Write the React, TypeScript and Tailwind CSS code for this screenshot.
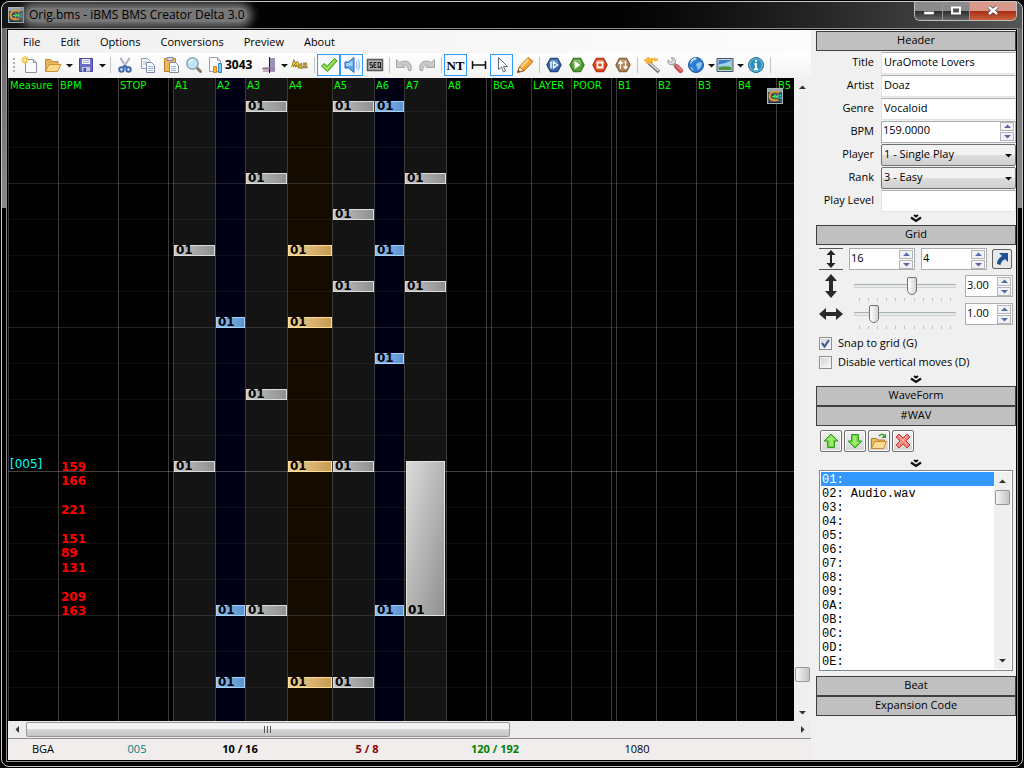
import { useState, type ReactNode } from 'react'
import clsx from 'clsx'

/* Chart data: positions are in ticks (192 per measure), relative to measure 005 */
const PX_PER_TICK = 3
const MEASURE_Y = 393

type Tone = 'white' | 'blue' | 'gold'
type Note = { at: number; until?: number }
type Lane = { label?: string; width: string; bg?: string; tone?: Tone; notes?: Note[] }

const at = (...ticks: number[]): Note[] => ticks.map((t) => ({ at: t }))

const LANES: Lane[] = [
  { label: 'Measure', width: 'w-[50px]' },
  { label: 'BPM', width: 'w-[60px]' },
  { label: 'STOP', width: 'w-[50px]' },
  { width: 'w-[5px]' },
  { label: 'A1', width: 'w-[42px]', bg: 'bg-[#141414]', tone: 'white', notes: at(72, 0) },
  { label: 'A2', width: 'w-[30px]', bg: 'bg-[#000014]', tone: 'blue', notes: at(48, -48, -72) },
  { label: 'A3', width: 'w-[42px]', bg: 'bg-[#141414]', tone: 'white', notes: at(120, 96, 24, -48) },
  { label: 'A4', width: 'w-[45px]', bg: 'bg-[#140c00]', tone: 'gold', notes: at(72, 48, 0, -72) },
  { label: 'A5', width: 'w-[42px]', bg: 'bg-[#141414]', tone: 'white', notes: at(120, 84, 60, 0, -72) },
  { label: 'A6', width: 'w-[30px]', bg: 'bg-[#000014]', tone: 'blue', notes: at(120, 72, 36, -48) },
  { label: 'A7', width: 'w-[42px]', bg: 'bg-[#141414]', tone: 'white', notes: [...at(96, 60), { at: -48, until: 0 }] },
  { label: 'A8', width: 'w-[40px]' },
  { width: 'w-[5px]' },
  { label: 'BGA', width: 'w-[40px]' },
  { label: 'LAYER', width: 'w-[40px]' },
  { label: 'POOR', width: 'w-[40px]' },
  { width: 'w-[5px]' },
  { label: 'B1', width: 'w-[40px]' },
  { label: 'B2', width: 'w-[40px]' },
  { label: 'B3', width: 'w-[40px]' },
  { label: 'B4', width: 'w-[40px]' },
  { label: 'B5', width: 'w-[40px]' },
]

const BPM_CHANGES = [
  { at: 0, bpm: 159 },
  { at: -4.8, bpm: 166 },
  { at: -14.4, bpm: 221 },
  { at: -24, bpm: 151 },
  { at: -28.8, bpm: 89 },
  { at: -33.6, bpm: 131 },
  { at: -43.2, bpm: 209 },
  { at: -48, bpm: 163 },
]

const TONES: Record<Tone, string> = {
  white: 'border-[#dcdcdc] from-[#c4c4c4] to-[#909090]',
  blue: 'border-[#a8d0fa] from-[#8fbcec] to-[#5b93d0]',
  gold: 'border-[#ffdf9c] from-[#efcf92] to-[#c89c50]',
}

const WAVS = ['01:', '02: Audio.wav', '03:', '04:', '05:', '06:', '07:', '08:', '09:', '0A:', '0B:', '0C:', '0D:', '0E:']

const noteTop = (tick: number) => Math.round(MEASURE_Y - tick * PX_PER_TICK) - 10

/* ---------- icons ---------- */

function Svg({ children, size = 18 }: { children: ReactNode; size?: number }) {
  return (
    <svg width={size} height={size} viewBox="0 0 18 18" fill="none" className="shrink-0">
      {children}
    </svg>
  )
}

function AppIcon() {
  return (
    <svg width="16" height="16" viewBox="0 0 16 16" className="shrink-0">
      <rect x=".5" y=".5" width="15" height="15" fill="#44535c" stroke="#a9b4ba" />
      <rect x="1" y="1" width="14" height="3" fill="#98a6ae" />
      <path d="M12 4.500C8 2.500 2.500 4 2.500 8S7 13 11 12" fill="none" stroke="#ee9a2c" strokeWidth="1.800" />
      <path d="M5 8.500h2M7.500 10.500l.5-3.500 1.500 2L11 7v3.500" fill="none" stroke="#55e06a" strokeWidth="1.200" />
      <path d="M12.500 10h2M12.500 7.500h2" stroke="#38b8f0" strokeWidth="1.500" />
      <path d="M2 14.500h12" stroke="#222b30" />
    </svg>
  )
}

const NewIcon = () => (
  <Svg>
    <path d="M4.500 3.500h8l3 3v10h-11z" fill="#fafbfd" stroke="#8a93a8" />
    <path d="M12.500 3.500v3h3" fill="#dde3ee" stroke="#8a93a8" />
    <path d="M4 0v8M0 4h8M1.200 1.200l5.600 5.600M6.800 1.200L1.200 6.800" stroke="#f6b81c" strokeWidth="1.200" />
    <circle cx="4" cy="4" r="1.500" fill="#fff3a0" />
  </Svg>
)

const OpenIcon = () => (
  <Svg>
    <path d="M1.500 15.500v-12h5l1.500 2h6v3" fill="#e8b45a" stroke="#c88a34" />
    <path d="M1.500 15.500l3.500-7h12l-3.500 7z" fill="#ffd98a" stroke="#cf9238" />
  </Svg>
)

const SaveIcon = () => (
  <Svg>
    <path d="M2.500 2.500h13v13h-13z" fill="#6a6ec4" stroke="#45489c" />
    <path d="M5 3h8v5H5z" fill="#f4f6ff" />
    <path d="M6 4.500h6M6 6.500h6" stroke="#a9add8" />
    <path d="M5 11h8v4.500H5z" fill="#c6c9e8" />
    <path d="M6.500 12h2.500v3.500H6.500z" fill="#45489c" />
  </Svg>
)

const CutIcon = () => (
  <Svg>
    <path d="M4.500 2l6 9M13.500 2l-6 9" stroke="#8e99a8" strokeWidth="2" />
    <path d="M5 2l5.500 8.500M13 2l-5.500 8.500" stroke="#e4e8ee" strokeWidth=".7" />
    <circle cx="5.500" cy="13.500" r="2.200" stroke="#3c66b4" strokeWidth="2" />
    <circle cx="12.500" cy="13.500" r="2.200" stroke="#3c66b4" strokeWidth="2" />
    <path d="M6.500 12l2.500-2 2.500 2" stroke="#3c66b4" strokeWidth="2.200" />
  </Svg>
)

const CopyIcon = () => (
  <Svg>
    <path d="M2.500 2.500h6l3 3v7h-9z" fill="#f5f7fb" stroke="#8f9bb2" />
    <path d="M4 6h4M4 8h4" stroke="#b4bed2" />
    <path d="M7.500 6.500h5l3 3v7h-8z" fill="#fafbfe" stroke="#7f8ca8" />
    <path d="M9 10.500h5M9 12.500h5M9 14.500h5" stroke="#9fb0d0" />
  </Svg>
)

const PasteIcon = () => (
  <Svg>
    <path d="M2.500 2.500h11v13h-11z" fill="#f0b65e" stroke="#c07f2c" />
    <path d="M5 1.500h6v3H5z" fill="#d8dae0" stroke="#8a8a90" />
    <path d="M7.500 6.500h6l3 3v7h-9z" fill="#fafbfe" stroke="#7f8ca8" />
    <path d="M9 10.500h5M9 12.500h5M9 14.500h5" stroke="#9fb0d0" />
  </Svg>
)

const FindIcon = () => (
  <Svg>
    <path d="M11.500 11.500l4 4" stroke="#8c7466" strokeWidth="3" strokeLinecap="round" />
    <circle cx="7.500" cy="7.500" r="5.700" fill="#bfe4fa" stroke="#8fa6ba" strokeWidth="1.500" />
    <path d="M4.500 7a3.500 3.500 0 013.500-3" stroke="#fff" strokeWidth="1.500" />
  </Svg>
)

const StatsIcon = () => (
  <Svg>
    <path d="M3.500 1.500h8l3 3v11h-11z" fill="#fafbfd" stroke="#9aa2b2" />
    <path d="M11.500 1.500v3h3" stroke="#9aa2b2" />
    <path d="M7.500 10.500h3v6h-3z" fill="#ffb43c" stroke="#e07d10" />
    <path d="M12.500 7.500h3v9h-3z" fill="#7cc6f8" stroke="#2a86d0" />
  </Svg>
)

const ColumnIcon = () => (
  <Svg>
    <path d="M10 2h5v10h-5z" fill="#9d90bc" />
    <path d="M3 11h6v5H3z" fill="#c8a8b8" />
    <path d="M10 12h5v4h-5z" fill="#9d8fb4" />
    <path d="M9.500 1v16" stroke="#1b1b22" />
    <path d="M2 12.500h13" stroke="#8a7a98" />
  </Svg>
)

const MyBmsIcon = () => (
  <Svg>
    <path d="M1.500 11l1.500-5 1.500 3L6.500 6 6 11M8 8v3h2M10 7v6M12 8h4M11.500 11h5" stroke="#6a5a30" strokeWidth="2.400" />
    <path d="M1.500 11l1.500-5 1.500 3L6.500 6 6 11M8 8v3h2M10 7v6" stroke="#f2d21c" strokeWidth="1.100" />
    <path d="M12 8h4M11.500 11h5" stroke="#e8b860" />
  </Svg>
)

const CheckIcon = () => (
  <Svg>
    <path d="M1.500 10l3-2.500L7 10.500l7.500-8L17 5 7.500 15.500z" fill="#7ed63e" stroke="#3f9418" />
    <path d="M3.500 9.500L7 13l8-9" stroke="#b7f07e" />
  </Svg>
)

const SpeakerIcon = () => (
  <Svg>
    <path d="M2 6h3.500L11 1.500v15L5.500 12H2z" fill="#5ea4ee" stroke="#2868c0" />
    <path d="M3 7h3l3.500-3v6H3z" fill="#a4d0fa" />
    <path d="M13 5.500q2 3.500 0 7M15 3.500q3 5.500 0 11" stroke="#8cc0f4" strokeWidth="1.200" />
  </Svg>
)

const SeqIcon = () => (
  <Svg>
    <rect x="1.500" y="3.500" width="15" height="11" fill="#b0b0b0" stroke="#5a5a5a" strokeWidth="1.500" />
    <path d="M6.500 6.500H4V9h2.500v2.500H4M10.500 6.500h-2.500v5h2.500M8 9h2M12 6.500h2.500v5H12zM13.500 10.500l1.500 2" stroke="#111" />
  </Svg>
)

const UndoIcon = ({ flip }: { flip?: boolean }) => (
  <svg width="18" height="18" viewBox="0 0 18 18" className={clsx('shrink-0', flip && '-scale-x-100')}>
    <path d="M1.500 3.500v8h8.500L7.500 9q5-1 6 5.500h2.500q1.500-9-6-9.500-3.500 0-5.500 1.500z" fill="#cacaca" stroke="#a8a8a8" />
  </svg>
)

const NtIcon = () => <span className="font-['Liberation_Serif',serif] text-[13px] leading-none font-bold">NT</span>

const SpanIcon = () => (
  <Svg>
    <path d="M2.500 5v8M15.500 5v8M2 9h14" stroke="#111" strokeWidth="1.500" />
  </Svg>
)

const CursorIcon = () => (
  <Svg>
    <path d="M5.500 1.500v12l3-2.500 2 5 2-1-2-4.500h4z" fill="#fff" stroke="#6a6a6a" />
  </Svg>
)

const PencilIcon = () => (
  <Svg>
    <path d="M1.500 16.500l2-6 8.500-9 5 4-9 9.500z" fill="#f6a43a" stroke="#c06a14" />
    <path d="M3.500 11l8-8.500 2 1.500-8 9z" fill="#ffd07a" />
    <path d="M1.500 16.500l2-6 4.500 4z" fill="#f8e2bc" stroke="#a8682c" />
    <path d="M1.500 16.500l.8-2.500 1.700 1.500z" fill="#333" />
  </Svg>
)

function Hex({ fill, edge, children }: { fill: string; edge: string; children: ReactNode }) {
  return (
    <Svg>
      <path d="M5.500 2.500h7L16 9l-3.500 6.500h-7L2 9z" fill={fill} stroke={edge} strokeWidth="1.500" strokeLinejoin="round" />
      <path d="M6 3.500h6l2 4H4z" fill="#fff" opacity=".25" />
      {children}
    </Svg>
  )
}

const WandIcon = () => (
  <Svg>
    <path d="M6 7l10 9" stroke="#6e6e6e" strokeWidth="3.500" />
    <path d="M6.500 7l9 8" stroke="#e4e4e4" strokeWidth="1.500" />
    <path d="M1 4l3-1 1-2 2 2 3-1-1 3 1 2-3-.5L4 8 3.500 6z" fill="#f8b62c" stroke="#e89a18" strokeWidth=".6" />
    <path d="M10 3l2-1.500 1 1.500 2-1v3l-2-.5-1.500 1z" fill="#f6b020" />
  </Svg>
)

const WrenchIcon = () => (
  <Svg>
    <path d="M7.500 7.500l3 3" stroke="#9a9a9a" strokeWidth="3.500" />
    <path d="M2 4l2.500 2L6.500 4.500 5.500 1.500Q10 2 9.500 6.500 7 10 3.500 8.500 1 7 2 4z" fill="#dcdcdc" stroke="#8a8a8a" strokeWidth=".8" />
    <path d="M11 11l3.500 3.500" stroke="#c84c50" strokeWidth="5" strokeLinecap="round" />
    <path d="M11 10l4 4" stroke="#f08c8c" strokeWidth="1.500" strokeLinecap="round" />
  </Svg>
)

const GlobeIcon = () => (
  <Svg>
    <circle cx="9" cy="9" r="7.500" fill="#2f7fd0" stroke="#1c569c" />
    <path d="M3 6q3-4 7-4-1 3-4 3-1 3-3 3zM9 8q4-3 6-1-1 5-4 7-1-3-2-6zM3 11l3 1v3z" fill="#a8dcf4" opacity=".8" />
    <path d="M4 5q2-3 5-3" stroke="#fff" />
  </Svg>
)

const PictureIcon = () => (
  <Svg>
    <path d="M1 2.500h16v13H1z" fill="#c8d4dc" stroke="#3f5468" />
    <path d="M2.500 4h13v6h-13z" fill="#3a80c8" />
    <path d="M2.500 8.500q7-1 13-4V11h-13z" fill="#9fd0ee" />
    <path d="M2.500 11q6-1.500 13 0v3h-13z" fill="#4f9440" />
  </Svg>
)

const InfoIcon = () => (
  <Svg>
    <circle cx="9" cy="9" r="7.500" fill="#2d90bc" stroke="#1c6c94" />
    <circle cx="9" cy="9" r="6.300" stroke="#9cd4ea" strokeWidth=".8" />
    <path d="M9 4v2M7.500 8H9v5M7 13.200h4" stroke="#fff" strokeWidth="1.800" />
  </Svg>
)

const ArrowFaceIcon = ({ down }: { down?: boolean }) => (
  <svg width="18" height="18" viewBox="0 0 18 18" className={clsx('shrink-0', down && 'rotate-180')}>
    <path d="M9 2l7 7h-3.500v6.500h-7V9H2z" fill="#6ed63c" stroke="#2f9c1c" strokeLinejoin="round" />
    <path d="M9 4l4.500 4h-2.500v6H7.500V8h-3z" fill="#b2f08a" opacity=".7" />
  </svg>
)

const BrowseIcon = () => (
  <Svg>
    <path d="M1.500 16.500v-10h5l1 1.500h7v3" fill="#f0bc60" stroke="#b87a28" />
    <path d="M1.500 16.500l3-7h12l-3 7z" fill="#ffdc94" stroke="#c88a34" />
    <path d="M9 4q2.500-3 5-.5" stroke="#3a9c28" strokeWidth="1.500" />
    <path d="M16 1.500V6h-4.500z" fill="#3a9c28" />
  </Svg>
)

const RemoveIcon = () => (
  <Svg>
    <path d="M5 2l4 4 4-4 3 3-4 4 4 4-3 3-4-4-4 4-3-3 4-4-4-4z" fill="#f08078" stroke="#c83c3c" strokeLinejoin="round" />
    <path d="M5 4l8 9M13 4l-8 9" stroke="#fbb8b0" strokeWidth="1" />
  </Svg>
)

const Triangle = ({ dir = 'down', fill = '#111' }: { dir?: 'up' | 'down' | 'left' | 'right'; fill?: string }) => (
  <svg
    width="7"
    height="7"
    viewBox="0 0 7 7"
    className={clsx('shrink-0', dir === 'up' && 'rotate-180', dir === 'left' && 'rotate-90', dir === 'right' && '-rotate-90')}
  >
    <path d="M0 2h7L3.500 5.500z" fill={fill} />
  </svg>
)

/* ---------- toolbar ---------- */

function Tool({ label, active, children }: { label: string; active?: boolean; children: ReactNode }) {
  return (
    <button
      aria-label={label}
      className={clsx(
        'flex h-[22px] w-[23px] shrink-0 items-center justify-center border',
        active ? 'border-[#3399ff] bg-[#f6fafe]' : 'border-transparent'
      )}
    >
      {children}
    </button>
  )
}

function SplitTool({ label, children }: { label: string; children: ReactNode }) {
  return (
    <div className="flex shrink-0 items-center">
      <Tool label={label}>{children}</Tool>
      <button aria-label={`${label} options`} className="flex h-[22px] w-[10px] items-center justify-center">
        <Triangle />
      </button>
    </div>
  )
}

function MenuTool({ label, children }: { label: string; children: ReactNode }) {
  return (
    <button aria-label={label} className="flex h-[22px] w-[29px] shrink-0 items-center justify-center gap-[3px]">
      {children}
      <Triangle />
    </button>
  )
}

const Sep = () => <span className="mr-[2px] ml-[3px] h-4 w-px shrink-0 bg-[#c4c4c4]" />

function Toolbar() {
  return (
    <div className="flex h-[25px] shrink-0 items-center overflow-hidden bg-linear-to-b from-white to-[#f2f2f2] pb-px pl-[5px]">
      <svg width="5" height="16" viewBox="0 0 5 16" className="shrink-0">
        <path d="M1 1v14" stroke="#b0b0b0" strokeWidth="2" strokeDasharray="2 2" />
      </svg>
      <Tool label="New"><NewIcon /></Tool>
      <SplitTool label="Open"><OpenIcon /></SplitTool>
      <SplitTool label="Save"><SaveIcon /></SplitTool>
      <Sep />
      <Tool label="Cut"><CutIcon /></Tool>
      <Tool label="Copy"><CopyIcon /></Tool>
      <Tool label="Paste"><PasteIcon /></Tool>
      <Tool label="Find"><FindIcon /></Tool>
      <button className="flex h-[22px] w-[54px] shrink-0 items-center gap-px pl-px text-xs font-bold">
        <StatsIcon />
        3043
      </button>
      <MenuTool label="Columns"><ColumnIcon /></MenuTool>
      <Tool label="My BMS"><MyBmsIcon /></Tool>
      <Sep />
      <Tool label="Error check" active><CheckIcon /></Tool>
      <Tool label="Preview on click" active><SpeakerIcon /></Tool>
      <Tool label="Sequencer"><SeqIcon /></Tool>
      <Sep />
      <Tool label="Undo"><UndoIcon /></Tool>
      <Tool label="Redo"><UndoIcon flip /></Tool>
      <Sep />
      <Tool label="NT mode" active><NtIcon /></Tool>
      <Tool label="Long note"><SpanIcon /></Tool>
      <Tool label="Select" active><CursorIcon /></Tool>
      <Tool label="Write"><PencilIcon /></Tool>
      <Sep />
      <Tool label="Play from start">
        <Hex fill="#3468ac" edge="#234c84"><path d="M6 5.500v7M8.500 6l4 3-4 3z" stroke="#fff" fill="none" strokeWidth="1.500" /></Hex>
      </Tool>
      <Tool label="Play">
        <Hex fill="#58a034" edge="#3c7a20"><path d="M6.500 5l6 4-6 4z" fill="#fff" /></Hex>
      </Tool>
      <Tool label="Stop">
        <Hex fill="#e04a20" edge="#b83410"><path d="M6.500 6.500h5v5h-5z" fill="#e04a20" stroke="#fff" strokeWidth="1.800" /></Hex>
      </Tool>
      <Tool label="Preview options">
        <Hex fill="#b08458" edge="#8c643c"><path d="M6.500 13V5.500M4.500 7.500l2-2 2 2M11.500 5v7.500M9.500 10.500l2 2 2-2" stroke="#fff" strokeWidth="1.300" /></Hex>
      </Tool>
      <Sep />
      <Tool label="Visual options"><WandIcon /></Tool>
      <Tool label="General options"><WrenchIcon /></Tool>
      <MenuTool label="Language"><GlobeIcon /></MenuTool>
      <MenuTool label="Theme"><PictureIcon /></MenuTool>
      <Tool label="About"><InfoIcon /></Tool>
      <Sep />
    </div>
  )
}

/* ---------- chart ---------- */

function NoteBlock({ note, tone }: { note: Note; tone: Tone }) {
  const long = note.until !== undefined
  const top = noteTop(note.until ?? note.at)
  return (
    <div
      className={clsx(
        'absolute z-10 flex items-end border pl-px',
        long
          ? 'left-px right-px border-[#e4e4e4] bg-linear-to-br from-[#dcdcdc] to-[#909090]'
          : clsx('inset-x-0 bg-linear-to-r', TONES[tone])
      )}
      style={{ top, height: noteTop(note.at) - top + 11 }}
    >
      <span className="text-xs leading-[9px] font-bold">01</span>
    </div>
  )
}

function Chart() {
  return (
    <div className="relative isolate flex min-w-0 flex-1 overflow-hidden bg-black font-['DejaVu_Sans',sans-serif]">
      {LANES.map((lane, i) => (
        <div key={i} className={clsx('relative shrink-0 border-l border-[#3a3a3a]', lane.width, lane.bg)}>
          <span className="block pl-px text-[10px] leading-4 text-[#00ff00]">{lane.label}</span>
          {lane.notes?.map((n) => <NoteBlock key={n.at} note={n} tone={lane.tone ?? 'white'} />)}
          {lane.label === 'Measure' && (
            <span className="absolute left-px text-xs leading-[14px] text-[#00ffff]" style={{ top: MEASURE_Y - 14 }}>
              [005]
            </span>
          )}
          {lane.label === 'BPM' &&
            BPM_CHANGES.map((c) => (
              <span
                key={c.at}
                className="absolute left-[2px] text-xs leading-[13px] font-bold text-[#ff0000]"
                style={{ top: noteTop(c.at) }}
              >
                {c.bpm}
              </span>
            ))}
        </div>
      ))}

      {/* Beat lines */}
      <div className="pointer-events-none absolute inset-0 overflow-hidden">
        <div className="h-[34px] border-b border-white/5" />
        {Array.from({ length: 40 }, (_, i) => (
          <div
            key={i}
            className={clsx('h-9 border-b', i === 9 ? 'border-white/25' : i % 4 === 1 ? 'border-white/12' : 'border-white/5')}
          />
        ))}
      </div>

      <div className="absolute top-[10px] right-[11px] z-10">
        <AppIcon />
      </div>
    </div>
  )
}

/* ---------- scroll bars ---------- */

function VScroll({ thumbAt, className }: { thumbAt: 'start' | 'end'; className?: string }) {
  return (
    <div className={clsx('flex w-[17px] shrink-0 flex-col items-center bg-[#efefef]', className)}>
      <button aria-label="Scroll up" className="flex h-[18px] w-full items-center justify-center"><Triangle dir="up" fill="#333" /></button>
      <div className={clsx('flex flex-1 flex-col', thumbAt === 'end' && 'justify-end pb-[22px]')}>
        <div className="h-[15px] w-[15px] rounded-xs border border-[#979797] bg-linear-to-r from-[#f6f6f6] to-[#c4c4c8]" />
      </div>
      <button aria-label="Scroll down" className="flex h-[17px] w-full items-center justify-center"><Triangle fill="#333" /></button>
    </div>
  )
}

function HScroll() {
  return (
    <div className="flex h-[17px] shrink-0 items-center bg-[#ececec]">
      <button aria-label="Scroll left" className="flex h-full w-[18px] items-center justify-center"><Triangle dir="left" fill="#333" /></button>
      <div className="flex flex-1">
        <div className="flex h-[15px] w-[63%] items-center justify-center gap-[2px] rounded-xs border border-[#979797] bg-linear-to-b from-[#f4f4f4] from-50% via-[#d8d8d8] via-50% to-[#c4c4c4]">
          <i className="h-[7px] w-px bg-[#555]" />
          <i className="h-[7px] w-px bg-[#555]" />
          <i className="h-[7px] w-px bg-[#555]" />
        </div>
      </div>
      <button aria-label="Scroll right" className="flex h-full w-[17px] items-center justify-center"><Triangle dir="right" fill="#333" /></button>
    </div>
  )
}

/* ---------- side panel ---------- */

function SectionButton({ children }: { children: ReactNode }) {
  return (
    <button className="block h-5 w-full border border-[#404040] bg-[#c0c0c0] pb-[2px] text-center text-[11px] leading-4">
      {children}
    </button>
  )
}

function Collapse() {
  return (
    <button aria-label="Collapse" className="flex h-[13px] w-full items-center justify-center">
      <svg width="12" height="9" viewBox="0 0 12 9" fill="none">
        <path d="M1 3.500l5 3.500 5-3.500" stroke="#111" strokeWidth="2.200" />
        <path d="M4 1l2 1.500L8 1" stroke="#111" strokeWidth="2" />
      </svg>
    </button>
  )
}

function Spinner({ id, label, value, className }: { id: string; label?: string; value: string; className?: string }) {
  return (
    <div className={clsx('flex h-[22px] items-center border border-[#abadb3] bg-white pr-px', className)}>
      <input id={id} aria-label={label} defaultValue={value} className="h-full w-0 min-w-0 flex-1 bg-white pb-1 pl-px text-[11px] outline-none" />
      <div className="flex flex-col gap-px">
        <button aria-label="Increase" className="flex h-[9px] w-[14px] items-center justify-center border border-[#b4b4b8] bg-[#f2f2f4]">
          <Triangle dir="up" fill="#5468a8" />
        </button>
        <button aria-label="Decrease" className="flex h-[9px] w-[14px] items-center justify-center border border-[#b4b4b8] bg-[#f2f2f4]">
          <Triangle fill="#5468a8" />
        </button>
      </div>
    </div>
  )
}

function Field({ id, label, children }: { id: string; label: string; children: ReactNode }) {
  return (
    <div className="flex h-[23px] items-center">
      <label htmlFor={id} className="w-[65px] shrink-0 pr-[7px] text-right text-[11px]">{label}</label>
      <div className="min-w-0 flex-1">{children}</div>
    </div>
  )
}

function TextField({ id, label, value }: { id: string; label: string; value: string }) {
  return (
    <Field id={id} label={label}>
      <input
        id={id}
        defaultValue={value}
        className="block h-[22px] w-full border border-[#e2e3ea] border-t-[#abadb3] bg-white px-[2px] pb-[3px] text-[11px] outline-none"
      />
    </Field>
  )
}

function SelectField({ id, label, options }: { id: string; label: string; options: string[] }) {
  return (
    <Field id={id} label={label}>
      <div className="relative">
        <select
          id={id}
          className="block h-[22px] w-full appearance-none rounded-xs border border-[#707070] bg-linear-to-b from-[#f2f2f2] from-50% via-[#dedede] via-50% to-[#cfcfcf] pl-[2px] text-[11px] outline-none"
        >
          {options.map((o) => <option key={o}>{o}</option>)}
        </select>
        <span className="pointer-events-none absolute top-[8px] right-[4px]"><Triangle /></span>
      </div>
    </Field>
  )
}

function Slider({ label, value, onChange }: { label: string; value: number; onChange: (v: number) => void }) {
  return (
    <div className="flex w-[102px] flex-col pt-[5px]">
      <input
        type="range"
        aria-label={label}
        min={0.25}
        max={5}
        step={0.05}
        value={value}
        onChange={(e) => onChange(Number(e.target.value))}
        className="block h-[18px] w-full appearance-none bg-transparent [&::-webkit-slider-runnable-track]:h-[4px] [&::-webkit-slider-runnable-track]:border [&::-webkit-slider-runnable-track]:border-[#d0d4d4] [&::-webkit-slider-runnable-track]:border-t-[#a8b0b0] [&::-webkit-slider-runnable-track]:bg-[#e7eaea] [&::-webkit-slider-thumb]:-mt-[8px] [&::-webkit-slider-thumb]:h-[18px] [&::-webkit-slider-thumb]:w-[10px] [&::-webkit-slider-thumb]:appearance-none [&::-webkit-slider-thumb]:rounded-t-xs [&::-webkit-slider-thumb]:rounded-b-[5px] [&::-webkit-slider-thumb]:border [&::-webkit-slider-thumb]:border-[#707070] [&::-webkit-slider-thumb]:bg-linear-to-r [&::-webkit-slider-thumb]:from-white [&::-webkit-slider-thumb]:to-[#d4d4d4]"
      />
      <div className="flex justify-between px-[5px] pt-[3px]">
        {Array.from({ length: 11 }, (_, i) => <i key={i} className="h-[3px] w-px bg-[#c0c0c0]" />)}
      </div>
    </div>
  )
}

function CheckRow({ label, checked, onChange }: { label: string; checked: boolean; onChange: (v: boolean) => void }) {
  return (
    <label className="flex h-[19px] items-center gap-[6px] text-[11px]">
      <span className="relative flex">
        <input
          type="checkbox"
          checked={checked}
          onChange={(e) => onChange(e.target.checked)}
          className="h-[13px] w-[13px] appearance-none border border-[#8e8f8f] bg-linear-to-br from-[#cdd2d8] to-[#fafafa] shadow-[inset_0_0_0_1px_#f4f4f4]"
        />
        {checked && (
          <svg width="13" height="13" viewBox="0 0 13 13" className="pointer-events-none absolute inset-0">
            <path d="M3 6l2.500 3.500L10 3" fill="none" stroke="#3c4f94" strokeWidth="2" />
          </svg>
        )}
      </span>
      {label}
    </label>
  )
}

function IconButton({ label, children }: { label: string; children: ReactNode }) {
  return (
    <button
      aria-label={label}
      className="flex h-[22px] w-[22px] items-center justify-center rounded-xs border border-[#707070] bg-linear-to-b from-[#f4f4f4] to-[#d4d4d4] shadow-[inset_0_0_0_1px_#fafafa]"
    >
      {children}
    </button>
  )
}

function SidePanel() {
  const [vZoom, setVZoom] = useState(3)
  const [hZoom, setHZoom] = useState(1)
  const [snap, setSnap] = useState(true)
  const [lockVertical, setLockVertical] = useState(false)
  const [wav, setWav] = useState(0)

  return (
    <aside className="w-[205px] shrink-0 bg-[#f0f0f0] pt-px pl-[5px]">
      <SectionButton>Header</SectionButton>
      <TextField id="title" label="Title" value="UraOmote Lovers" />
      <TextField id="artist" label="Artist" value="Doaz" />
      <TextField id="genre" label="Genre" value="Vocaloid" />
      <Field id="bpm" label="BPM"><Spinner id="bpm" value="159.0000" /></Field>
      <SelectField id="player" label="Player" options={['1 - Single Play', '2 - Couple Play', '3 - Double Play']} />
      <SelectField id="rank" label="Rank" options={['3 - Easy', '2 - Normal', '1 - Hard', '0 - Very Hard']} />
      <TextField id="level" label="Play Level" value="" />
      <Collapse />

      <SectionButton>Grid</SectionButton>
      <div className="flex h-[27px] items-center pt-px pl-[3px]">
        <svg width="24" height="22" viewBox="0 0 24 22" fill="none">
          <path d="M0 .500h24M0 21.500h24" stroke="#555" />
          <path d="M12 4v14" stroke="#222" strokeWidth="2" />
          <path d="M12 2l4.500 5h-9zM12 20l4.500-5h-9z" fill="#222" />
        </svg>
        <Spinner id="division" label="Grid division" value="16" className="ml-[6px] w-[66px]" />
        <Spinner id="subdivision" label="Grid subdivision" value="4" className="ml-[6px] w-[66px]" />
        <button aria-label="Swap" className="ml-[5px] flex h-5 w-5 items-center justify-center rounded-xs border border-[#606060] bg-[#e8e8e8]">
          <svg width="14" height="14" viewBox="0 0 14 14">
            <path d="M4 1h9v9l-3-3q-4 2-4.500 6L2 12q0-5 5-8z" fill="#1c4f94" />
          </svg>
        </button>
      </div>
      <div className="flex h-[28px] items-center pl-[3px]">
        <svg width="24" height="24" viewBox="0 0 24 24">
          <path d="M12 0l6 7h-4v10h4l-6 7-6-7h4V7H6z" fill="#2a2a2a" />
        </svg>
        <span className="ml-[11px]"><Slider label="Vertical zoom" value={vZoom} onChange={setVZoom} /></span>
        <Spinner key={vZoom} id="vzoom" label="Vertical zoom value" value={vZoom.toFixed(2)} className="ml-[9px] w-[48px]" />
      </div>
      <div className="flex h-[28px] items-center pl-[3px]">
        <svg width="24" height="24" viewBox="0 0 24 24">
          <path d="M0 12l7-6v4h10V6l7 6-7 6v-4H7v4z" fill="#2a2a2a" />
        </svg>
        <span className="ml-[11px]"><Slider label="Horizontal zoom" value={hZoom} onChange={setHZoom} /></span>
        <Spinner key={hZoom} id="hzoom" label="Horizontal zoom value" value={hZoom.toFixed(2)} className="ml-[9px] w-[48px]" />
      </div>
      <div className="pt-[6px] pl-[3px]">
        <CheckRow label="Snap to grid (G)" checked={snap} onChange={setSnap} />
        <CheckRow label="Disable vertical moves (D)" checked={lockVertical} onChange={setLockVertical} />
      </div>
      <div className="pt-px"><Collapse /></div>

      <SectionButton>WaveForm</SectionButton>
      <SectionButton>#WAV</SectionButton>
      <div className="flex gap-[2px] pt-[4px] pb-[5px] pl-[4px]">
        <IconButton label="Move up"><ArrowFaceIcon /></IconButton>
        <IconButton label="Move down"><ArrowFaceIcon down /></IconButton>
        <IconButton label="Browse"><BrowseIcon /></IconButton>
        <IconButton label="Remove"><RemoveIcon /></IconButton>
      </div>
      <Collapse />
      <div className="mr-[3px] mb-[5px] ml-[3px] flex h-[201px] border border-[#828790] bg-white p-px">
        <ul className="min-w-0 flex-1">
          {WAVS.map((w, i) => (
            <li key={w}>
              <button
                onClick={() => setWav(i)}
                className={clsx(
                  "block h-[14px] w-full pt-px pl-px text-left font-['Liberation_Mono',monospace] text-xs leading-[14px]",
                  i === wav && 'bg-[#3399ff] text-white'
                )}
              >
                {w}
              </button>
            </li>
          ))}
        </ul>
        <VScroll thumbAt="start" />
      </div>
      <SectionButton>Beat</SectionButton>
      <SectionButton>Expansion Code</SectionButton>
    </aside>
  )
}

/* ---------- window ---------- */

function TitleBar() {
  return (
    <header className="flex h-[26px] shrink-0 items-start justify-between">
      <div className="flex h-[26px] items-center gap-[3px] pl-[2px]">
        <AppIcon />
        <h1 className="rounded-full bg-[#777] px-[2px] text-xs leading-[14px] text-black shadow-[0_0_8px_5px_#777]">
          Orig.bms - iBMS BMS Creator Delta 3.0
        </h1>
      </div>
      <div className="mr-px flex h-[19px] overflow-hidden rounded-b-md border border-t-0 border-[#c0c0c0]">
        <button aria-label="Minimize" className="flex w-[28px] items-center justify-center border-r border-[#999] bg-linear-to-b from-[#8a8a8a] from-50% via-[#2c2c2c] via-50% to-[#666]">
          <svg width="12" height="12" viewBox="0 0 12 12"><path d="M1 6.500h10v3H1z" fill="#fff" stroke="#555" strokeWidth=".5" /></svg>
        </button>
        <button aria-label="Maximize" className="flex w-[27px] items-center justify-center border-r border-[#999] bg-linear-to-b from-[#8a8a8a] from-50% via-[#2c2c2c] via-50% to-[#666]">
          <svg width="12" height="12" viewBox="0 0 12 12"><path d="M2 2.500h8v6H2z" fill="#555" stroke="#fff" strokeWidth="2" /></svg>
        </button>
        <button aria-label="Close" className="flex w-[46px] items-center justify-center bg-linear-to-b from-[#d8988c] from-50% via-[#a82c14] via-50% to-[#c8603c]">
          <svg width="12" height="12" viewBox="0 0 12 12">
            <path d="M2 2l8 7M10 2L2 9" stroke="#444" strokeWidth="4" />
            <path d="M2 2l8 7M10 2L2 9" stroke="#fff" strokeWidth="2.500" />
          </svg>
        </button>
      </div>
    </header>
  )
}

function MenuBar() {
  return (
    <nav className="flex h-[23px] shrink-0 items-center gap-5 bg-linear-to-r from-[#f1f1f1] to-[#fcfcfc] pt-px pl-[15px] text-[11px]">
      {['File', 'Edit', 'Options', 'Conversions', 'Preview', 'About'].map((m) => (
        <button key={m}>{m}</button>
      ))}
    </nav>
  )
}

function StatusBar() {
  return (
    <footer className="flex h-[22px] shrink-0 items-center border-t border-[#909090] bg-[#f0edec] text-center text-[11px]">
      <span className="w-[70px]">BGA</span>
      <span className="w-[118px] text-[#008080]">005</span>
      <b className="w-[88px]">10 / 16</b>
      <b className="w-[166px] text-[#8b0000]">5 / 8</b>
      <b className="w-[90px] text-[#008000]">120 / 192</b>
      <span className="w-[194px]">1080</span>
    </footer>
  )
}

export default function App() {
  return (
    <div className="flex h-screen min-h-[768px] bg-black p-px font-['Open_Sans','Noto_Sans',sans-serif] text-black">
      <div className="flex min-w-0 flex-1 flex-col rounded-lg border border-[#c8c8c8] bg-linear-to-b from-[#666] from-0% via-[#888] via-27% to-black to-27% px-1 pb-1">
        <div className="-mx-1 flex min-h-0 flex-1 flex-col rounded-t-lg bg-linear-to-r from-[#161616] via-black to-[#555] bg-[length:100%_26px] bg-no-repeat px-1">
          <TitleBar />
          <main className="flex min-h-0 flex-1 border border-[#909090]">
            <div className="flex min-w-0 flex-1 border border-black">
              <div className="flex min-w-0 flex-1 flex-col bg-[#f0f0f0]">
                <MenuBar />
                <Toolbar />
                <div className="flex min-h-0 flex-1">
                  <Chart />
                  <VScroll thumbAt="end" />
                </div>
                <HScroll />
                <StatusBar />
              </div>
              <SidePanel />
            </div>
          </main>
        </div>
      </div>
    </div>
  )
}
